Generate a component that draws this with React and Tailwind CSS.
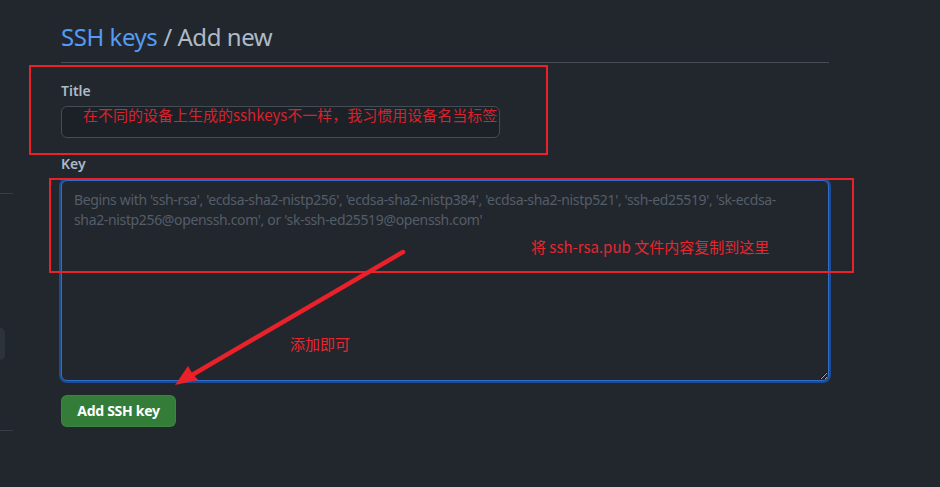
import React from 'react';

const annotationRed = '#e8212b';

export default function App() {
  return (
    <div className="relative h-[487px] w-full overflow-hidden bg-[#22272e] flex font-['Noto_Sans','Noto_Sans_CJK_SC',sans-serif] text-[#adbac7]">
      {/* Sidebar remnants at the left edge */}
      <aside className="w-[13px] shrink-0 flex flex-col">
        <div className="mt-[193px] h-px bg-[#373e47]" />
        <div className="mt-[134px] h-[32px] w-[5px] rounded-r-md bg-[#2d333b]" />
        <div className="mt-[70px] h-px bg-[#373e47]" />
      </aside>

      <main className="ml-[48px] w-[768px] shrink-0">
        <h2 className="pt-[19px] pb-[7px] text-2xl leading-9 font-normal tracking-[-0.45px] border-b border-[#444c56]">
          <a className="text-[#539bf5]">SSH keys</a> / Add new
        </h2>

        <form className="flex flex-col" onSubmit={(e) => e.preventDefault()}>
          <label className="mt-[18px] mb-[5px] text-sm leading-5 font-semibold text-[#adbac7]">Title</label>
          <input
            type="text"
            className="h-[32px] w-[439px] rounded-md border border-[#444c56] bg-[#1c2128] px-3 text-sm outline-none"
          />

          <label className="mt-[16px] mb-[6px] text-sm leading-5 font-semibold text-[#adbac7]">Key</label>
          <textarea
            className="h-[201px] w-[768px] rounded-md border border-[#316dca] bg-[#22272e] px-3 pt-[9px] text-sm leading-5 tracking-[-0.35px] text-[#adbac7] placeholder:text-[#545d68] outline-none shadow-[0_0_0_2px_#1b4b91]"
            placeholder={"Begins with 'ssh-rsa', 'ecdsa-sha2-nistp256', 'ecdsa-sha2-nistp384', 'ecdsa-sha2-nistp521', 'ssh-ed25519', 'sk-ecdsa-\nsha2-nistp256@openssh.com', or 'sk-ssh-ed25519@openssh.com'"}
          />

          <div className="mt-[14px]">
            <button
              type="submit"
              className="h-[32px] w-[115px] rounded-md border border-[#46954a]/40 bg-[#347d39] text-sm font-bold tracking-[-0.3px] text-white"
            >
              Add SSH key
            </button>
          </div>
        </form>
      </main>

      {/* Red annotation overlays */}
      <div className="pointer-events-none absolute left-[29px] top-[65px] h-[90px] w-[519px] border-2 border-[#e8212b]" />
      <div className="pointer-events-none absolute left-[49px] top-[178px] h-[95px] w-[805px] border-2 border-[#e8212b]" />

      <span className="pointer-events-none absolute left-[83px] top-[104px] text-[15px] leading-[22px] text-[#d8222c] font-['Noto_Sans_CJK_SC',sans-serif]">
        在不同的设备上生成的sshkeys不一样，我习惯用设备名当标签
      </span>
      <span className="pointer-events-none absolute left-[531px] top-[236px] text-[15px] leading-[22px] text-[#e8262e] font-['Noto_Sans_CJK_SC',sans-serif]">
        将 ssh-rsa.pub 文件内容复制到这里
      </span>
      <span className="pointer-events-none absolute left-[290px] top-[333px] text-[15px] leading-[22px] text-[#e8262e] font-['Noto_Sans_CJK_SC',sans-serif]">
        添加即可
      </span>

      <svg className="pointer-events-none absolute left-0 top-0" width="940" height="487" viewBox="0 0 940 487">
        <line x1="403" y1="252" x2="192" y2="375" stroke={annotationRed} strokeWidth="4.5" strokeLinecap="round" />
        <path d="M175 385 L188 366 L192 373 L198 380 Z" fill={annotationRed} />
      </svg>
    </div>
  );
}
